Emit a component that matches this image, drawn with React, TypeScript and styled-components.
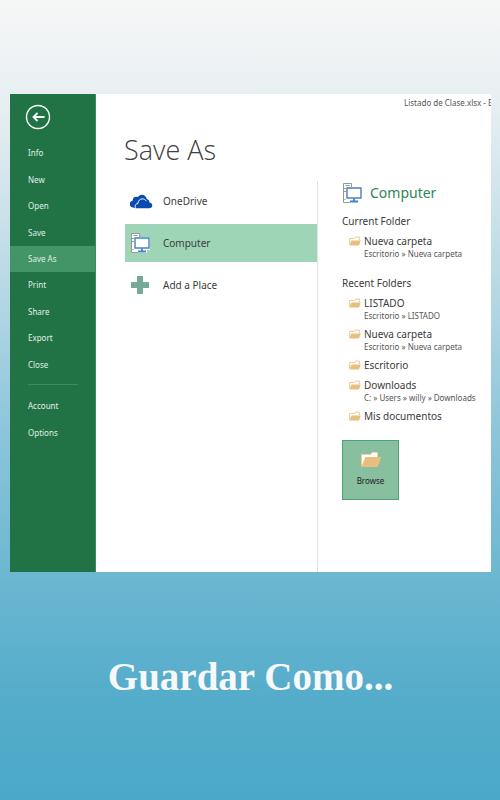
import React from "react";
import styled, { createGlobalStyle } from "styled-components";

const GlobalStyle = createGlobalStyle`
  * { box-sizing: border-box; }
  html, body, #root { min-height: 100vh; margin: 0; }
  body { font-family: "Noto Sans", "Open Sans", sans-serif; color: #3b3b3b; }
  h1, h2, h3, p, ul { margin: 0; padding: 0; font-weight: 400; }
  ul { list-style: none; }
  button { font: inherit; color: inherit; border: 0; padding: 0; background: none; cursor: pointer; text-align: left; }
  svg { display: block; flex: none; }
`;

const Slide = styled.main`
  min-height: 100vh;
  padding: 94px 9px 0 10px;
  background: linear-gradient(180deg, #f6f7f7 0%, #e7eff2 13%, #b9dae5 35%, #8cc5da 54%, #6cb7d1 72%, #53acca 88%, #4ba9c8 100%);
`;

const Window = styled.section`
  display: grid;
  grid-template-columns: 86px minmax(0, 1fr);
  min-height: 478px;
  background: #fff;
  overflow: hidden;
`;

const Sidebar = styled.nav`
  background: #217346;
  border-right: 1px solid #3c8a5f;
  color: #e0efe6;
  font-size: 8px;
  line-height: 12px;
`;

const BackButton = styled.button`
  display: block;
  margin: 10px 0 10px 15px;
`;

const NavList = styled.ul<{ $height: number }>`
  display: grid;
  grid-auto-rows: 1fr;
  height: ${(p) => p.$height}px;
`;

const NavItem = styled.button<{ $active?: boolean }>`
  display: flex;
  align-items: center;
  width: 100%;
  height: 100%;
  padding: 0 18px;
  background: ${(p) => (p.$active ? "#439467" : "transparent")};
`;

const Divider = styled.hr`
  margin: 6px 17px 8px 18px;
  border: 0;
  border-top: 1px solid #3c8a5f;
`;

const Content = styled.div`
  display: flex;
  flex-direction: column;
  min-width: 0;
`;

const FileTitle = styled.p`
  align-self: flex-end;
  width: 87px;
  padding-top: 3px;
  overflow: hidden;
  white-space: nowrap;
  font-size: 8px;
  line-height: 12px;
  color: #555;
`;

const PageTitle = styled.h1`
  padding: 21px 0 0 28px;
  font-family: "Open Sans", "Noto Sans", sans-serif;
  font-weight: 300;
  font-size: 27px;
  line-height: 40px;
  color: #404040;
`;

const Panels = styled.div`
  flex: 1;
  display: grid;
  grid-template-columns: minmax(0, 222px) minmax(0, 1fr);
  margin-top: 11px;
`;

const Places = styled.div`
  display: flex;
  flex-direction: column;
  gap: 4px;
  padding: 1px 0 0 29px;
  border-right: 1px solid #e2e2e2;
`;

const Place = styled.button<{ $active?: boolean }>`
  display: grid;
  grid-template-columns: 33px 1fr;
  align-items: center;
  height: 38px;
  padding-left: 5px;
  font-size: 10px;
  line-height: 14px;
  background: ${(p) => (p.$active ? "#9fd5b7" : "transparent")};
`;

const Details = styled.section`
  padding-left: 24px;
  min-width: 0;
`;

const Heading = styled.h2`
  display: flex;
  align-items: center;
  gap: 8px;
  height: 23px;
  font-size: 14px;
  line-height: 20px;
  color: #2f8557;
`;

const GroupTitle = styled.h3<{ $gap: number }>`
  margin-top: ${(p) => p.$gap}px;
  font-size: 10px;
  line-height: 14px;
`;

const Folders = styled.ul`
  display: flex;
  flex-direction: column;
  gap: 6px;
  padding: 6px 0 0 7px;
`;

const Folder = styled.button`
  display: grid;
  grid-template-columns: 15px 1fr;
  width: 100%;
  padding-top: 1px;
  white-space: nowrap;
`;

const FolderMark = styled.span`
  padding-top: 1px;
`;

const FolderName = styled.span`
  display: block;
  font-size: 10px;
  line-height: 13px;
`;

const FolderPath = styled.span`
  display: block;
  font-size: 8px;
  line-height: 11px;
  color: #555;
`;

const Browse = styled.button`
  display: flex;
  flex-direction: column;
  align-items: center;
  gap: 7px;
  width: 57px;
  height: 60px;
  margin-top: 17px;
  padding-top: 9px;
  border: 1px solid #4fa277;
  background: #87bf9f;
  font-size: 8px;
  line-height: 12px;
  color: #222;
`;

const Caption = styled.h2`
  padding: 83px 0 60px;
  text-align: center;
  font-family: "Liberation Serif", serif;
  font-weight: 700;
  font-size: 39px;
  line-height: 44px;
  color: #f7f8f8;
`;

const BackIcon = () => (
  <svg width="26" height="26" viewBox="0 0 26 26" fill="none" stroke="#fff">
    <circle cx="13" cy="13" r="11.5" strokeWidth="1.4" />
    <path d="M19.500 13H8.500M12.500 9l-4 4 4 4" strokeWidth="1.800" />
  </svg>
);

const CloudIcon = () => (
  <svg width="23" height="15" viewBox="0 0 23 15">
    <g transform="translate(-1 0)">
      <path fill="#0b4ab0" d="M4 13.500C1.500 13.500.8 12 .8 10.100c0-1.800 1-3.100 2.800-3.400C3.600 4.300 5 2.700 7.200 2.700c.6 0 1.200.1 1.700.4C9.800 1.600 11 .7 12.700.7c2.700 0 4.600 1.700 5 4.200 2 .5 2.800 2 2.800 3.500 1.700.5 2.800 1.500 2.800 2.800 0 1.700-1.300 3-3 3H8.200c-2 0-3-.4-4.200-.7z" />
      <path fill="none" stroke="#fff" strokeWidth="1" d="M7 14.400c-1.800-2.300-.5-4.700 1.900-4.900.2-2.800 2-4.600 4.500-4.600 1.700 0 3.100.8 3.900 2.300" />
    </g>
  </svg>
);

const ComputerIcon = () => (
  <svg width="20" height="20" viewBox="0 0 20 20">
    <path d="M1.500.5h8v19h-8z" fill="#fff" stroke="#999" />
    <path d="M3.500 2.500h4M2 5.500h2M2 8.500h2" stroke="#999" />
    <path d="M2.500 16.500h1" stroke="#777" />
    <path d="M4 4h16v13h-3v3H8v-3H4z" fill="#fff" />
    <path d="M5 5h14v10H5z" fill="#fff" stroke="#4580c2" strokeWidth="1.400" />
    <path d="M12 15.500v3M8 18.500h8" stroke="#4580c2" strokeWidth="1.800" />
  </svg>
);

const PlusIcon = () => (
  <svg width="20" height="20" viewBox="0 0 20 20">
    <path fill="#76aa96" d="M7 1h6v6h6v6h-6v6H7v-6H1V7h6z" />
  </svg>
);

const SmallFolderIcon = () => (
  <svg width="12" height="10" viewBox="0 0 12 10">
    <path d="M.6 8.500V2.500h5l.9-1.500h4v3" fill="#fff" stroke="#edcb95" strokeWidth="1" />
    <path d="M.5 9.500 2.300 4.500H11.800L10 9.500z" fill="#e8bf7e" />
  </svg>
);

const LargeFolderIcon = () => (
  <svg width="22" height="18" viewBox="0 0 22 18">
    <path d="M1.500 16.500V4.500h9l1.500-2h5.500V8" fill="#fff" stroke="#f0cf9c" />
    <path d="M1 17 5.500 7H21.500l-4 10z" fill="#e8bf7e" />
  </svg>
);

const mainNav = ["Info", "New", "Open", "Save", "Save As", "Print", "Share", "Export", "Close"];
const accountNav = ["Account", "Options"];

const recentFolders = [
  { name: "LISTADO", path: "Escritorio » LISTADO" },
  { name: "Nueva carpeta", path: "Escritorio » Nueva carpeta" },
  { name: "Escritorio" },
  { name: "Downloads", path: "C: » Users » willy » Downloads" },
  { name: "Mis documentos" },
];

const FolderEntry = ({ name, path }: { name: string; path?: string }) => (
  <li>
    <Folder>
      <FolderMark><SmallFolderIcon /></FolderMark>
      <span>
        <FolderName>{name}</FolderName>
        {path && <FolderPath>{path}</FolderPath>}
      </span>
    </Folder>
  </li>
);

export default function App() {
  return (
    <>
      <GlobalStyle />
      <Slide>
        <Window>
          <Sidebar>
            <BackButton aria-label="Back"><BackIcon /></BackButton>
            <NavList $height={238}>
              {mainNav.map((label) => (
                <li key={label}><NavItem $active={label === "Save As"}>{label}</NavItem></li>
              ))}
            </NavList>
            <Divider />
            <NavList $height={53}>
              {accountNav.map((label) => (
                <li key={label}><NavItem>{label}</NavItem></li>
              ))}
            </NavList>
          </Sidebar>
          <Content>
            <FileTitle>Listado de Clase.xlsx - Ex</FileTitle>
            <PageTitle>Save As</PageTitle>
            <Panels>
              <Places>
                <Place><CloudIcon />OneDrive</Place>
                <Place $active><ComputerIcon />Computer</Place>
                <Place><PlusIcon />Add a Place</Place>
              </Places>
              <Details>
                <Heading><ComputerIcon />Computer</Heading>
                <GroupTitle $gap={10}>Current Folder</GroupTitle>
                <Folders>
                  <FolderEntry name="Nueva carpeta" path="Escritorio » Nueva carpeta" />
                </Folders>
                <GroupTitle $gap={17}>Recent Folders</GroupTitle>
                <Folders>
                  {recentFolders.map((f) => <FolderEntry key={f.name} {...f} />)}
                </Folders>
                <Browse><LargeFolderIcon />Browse</Browse>
              </Details>
            </Panels>
          </Content>
        </Window>
        <Caption>Guardar Como...</Caption>
      </Slide>
    </>
  );
}
